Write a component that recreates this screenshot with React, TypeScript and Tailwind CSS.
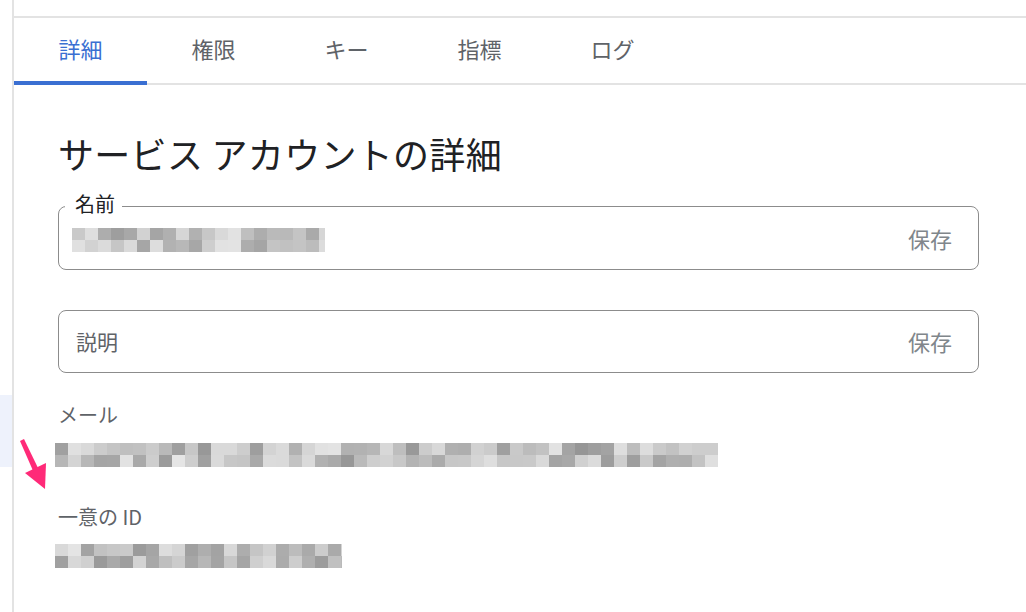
import React from 'react';

const tabs = ['詳細', '権限', 'キー', '指標', 'ログ'];

// deterministic grays for the pixelated (redacted) values
function cells(seed: number, count: number) {
  const out: number[] = [];
  let s = seed;
  for (let i = 0; i < count; i++) {
    s = (s * 9301 + 49297) % 233280;
    out.push(150 + Math.floor((s / 233280) * 80));
  }
  return out;
}

function Redacted({ width, seed, cell = 13 }: { width: number; seed: number; cell?: number }) {
  const n = Math.ceil(width / cell);
  const top = cells(seed, n);
  const bottom = cells(seed + 7, n);
  return (
    <div className="flex flex-col blur-[0.6px]" style={{ width }}>
      {[top, bottom].map((row, r) => (
        <div key={r} className="flex h-3 overflow-hidden">
          {row.map((g, i) => (
            <div key={i} className="h-3 shrink-0" style={{ width: cell, background: `rgb(${g},${g},${g})` }} />
          ))}
        </div>
      ))}
    </div>
  );
}

export default function App() {
  return (
    <div
      className="relative w-[1026px] h-[612px] bg-white overflow-hidden flex"
      style={{ fontFamily: '"Noto Sans CJK JP", "Noto Sans", sans-serif' }}
    >
      {/* left rail */}
      <div className="w-[12px] shrink-0 flex flex-col">
        <div className="h-[395px]" />
        <div className="h-[72px] bg-[#eef2fc]" />
      </div>
      <div className="flex-1 border-l-2 border-[#e3e3e3] flex flex-col">
        <div className="h-[18px] border-b-2 border-[#e3e3e3]" />

        {/* tabs */}
        <div className="flex h-[67px] border-b-2 border-[#e3e3e3]">
          {tabs.map((t, i) => (
            <div key={t} className="relative w-[133px] flex items-center justify-center pb-[5px]">
              <span className={`text-[22px] ${i === 0 ? 'text-[#3a6fd2]' : 'text-[#5f6368]'}`}>{t}</span>
              {i === 0 && <div className="absolute left-0 right-0 bottom-[-2px] h-[4px] bg-[#3a6fd2]" />}
            </div>
          ))}
        </div>

        <div className="pl-[44px] pr-[47px] flex flex-col">
          <h1 className="mt-[44px] text-[36px] leading-[48px] text-[#202124] tracking-[0.3px]">
            サービス アカウントの詳細
          </h1>

          {/* name field */}
          <div className="relative mt-[29px] h-[64px] rounded-[8px] border-[1.5px] border-[#8c8c8c] flex items-center pl-[13px] pr-[26px]">
            <span className="absolute left-[6px] top-[-17px] bg-white pl-[10px] pr-[7px] text-[20px] leading-[28px] text-[#202124]">
              名前
            </span>
            <div className="mt-[3px]">
              <Redacted width={253} seed={11} />
            </div>
            <span className="ml-auto text-[22px] text-[#80868b]">保存</span>
          </div>

          {/* description field */}
          <div className="mt-[40px] h-[63px] rounded-[8px] border-[1.5px] border-[#8c8c8c] flex items-center pl-[17px] pr-[26px]">
            <span className="text-[21px] text-[#5f6368]">説明</span>
            <span className="ml-auto text-[22px] text-[#80868b]">保存</span>
          </div>

          <div className="mt-[26px] text-[20px] leading-[32px] text-[#5f6368]">メール</div>
          <div className="mt-[12px] -ml-[3px]">
            <Redacted width={663} seed={23} />
          </div>

          <div className="mt-[34px] text-[20px] leading-[32px] text-[#5f6368]">一意の ID</div>
          <div className="mt-[11px] -ml-[3px]">
            <Redacted width={287} seed={41} />
          </div>
        </div>
      </div>

      {/* annotation arrow */}
      <svg className="absolute left-[14px] top-[432px]" width="40" height="64" viewBox="0 0 40 64">
        <polygon points="6,9 10,7 25,38 20,41" fill="#ff2a78" />
        <polygon points="11,41 32,31 31,57" fill="#ff2a78" />
      </svg>
    </div>
  );
}
